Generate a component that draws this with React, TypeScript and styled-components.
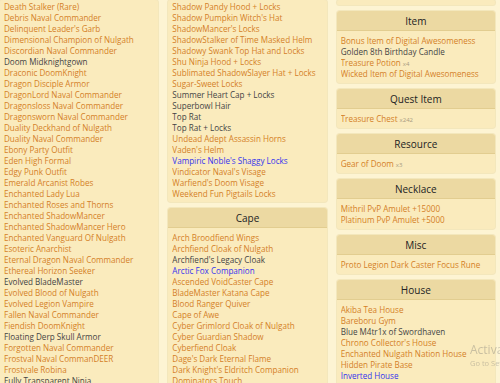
import * as React from 'react';
import styled, { createGlobalStyle } from 'styled-components';

type Tone = 'rare' | 'plain' | 'special';
type Entry = { name: string; tone?: Tone; qty?: number };
type Section = { title?: string; items: Entry[]; tail?: boolean };

const GlobalStyle = createGlobalStyle`
  html, body {
    margin: 0;
    padding: 0;
    height: 100%;
    overflow: hidden;
    background: #fdf4d3;
    font-family: 'Open Sans', 'Noto Sans', sans-serif;
  }
`;

const Page = styled.div`
  display: grid;
  grid-template-columns: repeat(3, 1fr);
  column-gap: 10px;
  padding-right: 5px;
  align-items: start;
`;

const Column = styled.div`
  display: flex;
  flex-direction: column;
  gap: 6px;
`;

const Card = styled.section<{ $tail?: boolean }>`
  background: #faebbd;
  border-radius: 3px;
  box-shadow: 0 0 0 1px rgba(214, 190, 120, 0.25);
  height: ${({ $tail }) => ($tail ? '5px' : 'auto')};
`;

const Header = styled.h3`
  margin: 0;
  height: 20px;
  line-height: 20px;
  background: #ecd9a2;
  border-bottom: 1px solid #e2cd90;
  border-radius: 3px 3px 0 0;
  box-sizing: border-box;
  text-align: center;
  font-size: 10px;
  font-weight: 400;
  color: #222;
`;

const Body = styled.ul<{ $flush?: boolean }>`
  list-style: none;
  margin: 0;
  padding: ${({ $flush }) => ($flush ? '1px 4px 3px' : '4px 4px 4px')};
`;

const toneColor: Record<Tone, string> = {
  rare: '#d47f27',
  plain: '#444444',
  special: '#3434ee',
};

const Row = styled.li<{ $tone: Tone }>`
  height: 11px;
  line-height: 11px;
  font-size: 8.1px;
  white-space: nowrap;
  overflow: hidden;
  color: ${({ $tone }) => toneColor[$tone]};
`;

const Qty = styled.span`
  margin-left: 2px;
  font-size: 6px;
  color: #a89a80;
`;

const Watermark = styled.div`
  position: fixed;
  left: 470px;
  top: 342px;
  white-space: nowrap;
  pointer-events: none;
  color: rgba(110, 110, 110, 0.35);
  font-family: 'Open Sans', sans-serif;
`;

const WatermarkTitle = styled.div`
  font-size: 12px;
  line-height: 16px;
`;

const WatermarkNote = styled.div`
  font-size: 7.5px;
  line-height: 11px;
`;

const r = (name: string, qty?: number): Entry => ({ name, tone: 'rare', qty });
const p = (name: string): Entry => ({ name, tone: 'plain' });
const s = (name: string): Entry => ({ name, tone: 'special' });

const left: Section[] = [
  {
    items: [
      r('Death Stalker (Rare)'),
      r('Debris Naval Commander'),
      r("Delinquent Leader's Garb"),
      r('Dimensional Champion of Nulgath'),
      r('Discordian Naval Commander'),
      p('Doom Midknightgown'),
      r('Draconic DoomKnight'),
      r('Dragon Disciple Armor'),
      r('DragonLord Naval Commander'),
      r('Dragonsloss Naval Commander'),
      r('Dragonsworn Naval Commander'),
      r('Duality Deckhand of Nulgath'),
      r('Duality Naval Commander'),
      r('Ebony Party Outfit'),
      r('Eden High Formal'),
      r('Edgy Punk Outfit'),
      r('Emerald Arcanist Robes'),
      r('Enchanted Lady Lua'),
      r('Enchanted Roses and Thorns'),
      r('Enchanted ShadowMancer'),
      r('Enchanted ShadowMancer Hero'),
      r('Enchanted Vanguard Of Nulgath'),
      r('Esoteric Anarchist'),
      r('Eternal Dragon Naval Commander'),
      r('Ethereal Horizon Seeker'),
      p('Evolved BladeMaster'),
      r('Evolved Blood of Nulgath'),
      r('Evolved Legion Vampire'),
      r('Fallen Naval Commander'),
      r('Fiendish DoomKnight'),
      p('Floating Derp Skull Armor'),
      r('Forgotten Naval Commander'),
      r('Frostval Naval CommanDEER'),
      r('Frostvale Robina'),
      p('Fully Transparent Ninja'),
    ],
  },
];

const middle: Section[] = [
  {
    items: [
      r('Shadow Pandy Hood + Locks'),
      r("Shadow Pumpkin Witch's Hat"),
      r("ShadowMancer's Locks"),
      r('ShadowStalker of Time Masked Helm'),
      r('Shadowy Swank Top Hat and Locks'),
      r('Shu Ninja Hood + Locks'),
      r('Sublimated ShadowSlayer Hat + Locks'),
      r('Sugar-Sweet Locks'),
      p('Summer Heart Cap + Locks'),
      p('Superbowl Hair'),
      p('Top Rat'),
      p('Top Rat + Locks'),
      r('Undead Adept Assassin Horns'),
      r("Vaden's Helm"),
      s("Vampiric Noble's Shaggy Locks"),
      r("Vindicator Naval's Visage"),
      r("Warfiend's Doom Visage"),
      r('Weekend Fun Pigtails Locks'),
    ],
  },
  {
    title: 'Cape',
    items: [
      r('Arch Broodfiend Wings'),
      r('Archfiend Cloak of Nulgath'),
      p("Archfiend's Legacy Cloak"),
      s('Arctic Fox Companion'),
      r('Ascended VoidCaster Cape'),
      r('BladeMaster Katana Cape'),
      r('Blood Ranger Quiver'),
      r('Cape of Awe'),
      r('Cyber Grimlord Cloak of Nulgath'),
      r('Cyber Guardian Shadow'),
      r('Cyberfiend Cloak'),
      r("Dage's Dark Eternal Flame"),
      r("Dark Knight's Eldritch Companion"),
      r('Dominators Touch'),
      r('Doom Vortex'),
    ],
  },
];

const right: Section[] = [
  { tail: true, items: [] },
  {
    title: 'Item',
    items: [
      r('Bonus Item of Digital Awesomeness'),
      p('Golden 8th Birthday Candle'),
      r('Treasure Potion', 4),
      r('Wicked Item of Digital Awesomeness'),
    ],
  },
  { title: 'Quest Item', items: [r('Treasure Chest', 242)] },
  { title: 'Resource', items: [r('Gear of Doom', 3)] },
  { title: 'Necklace', items: [r('Mithril PvP Amulet +15000'), r('Platinum PvP Amulet +5000')] },
  { title: 'Misc', items: [r('Proto Legion Dark Caster Focus Rune')] },
  {
    title: 'House',
    items: [
      r('Akiba Tea House'),
      r('Bareboru Gym'),
      p('Blue M4tr1x of Swordhaven'),
      r("Chrono Collector's House"),
      r('Enchanted Nulgath Nation House'),
      r('Hidden Pirate Base'),
      s('Inverted House'),
      r('Legion Botanical Garden'),
    ],
  },
];

const InventoryCard = ({ section }: { section: Section }) => {
  if (section.tail) return <Card $tail />;

  return (
    <Card>
      {section.title && <Header>{section.title}</Header>}
      <Body $flush={!section.title}>
        {section.items.map((item) => (
          <Row key={item.name} $tone={item.tone ?? 'rare'}>
            {item.name}
            {item.qty !== undefined && <Qty>x{item.qty}</Qty>}
          </Row>
        ))}
      </Body>
    </Card>
  );
};

const App = () => (
  <>
    <GlobalStyle />
    <Page>
      {[left, middle, right].map((sections, i) => (
        <Column key={i}>
          {sections.map((section, j) => (
            <InventoryCard key={j} section={section} />
          ))}
        </Column>
      ))}
    </Page>
    <Watermark>
      <WatermarkTitle>Activate Windows</WatermarkTitle>
      <WatermarkNote>Go to Settings to activate Windows.</WatermarkNote>
    </Watermark>
  </>
);

export default App;
